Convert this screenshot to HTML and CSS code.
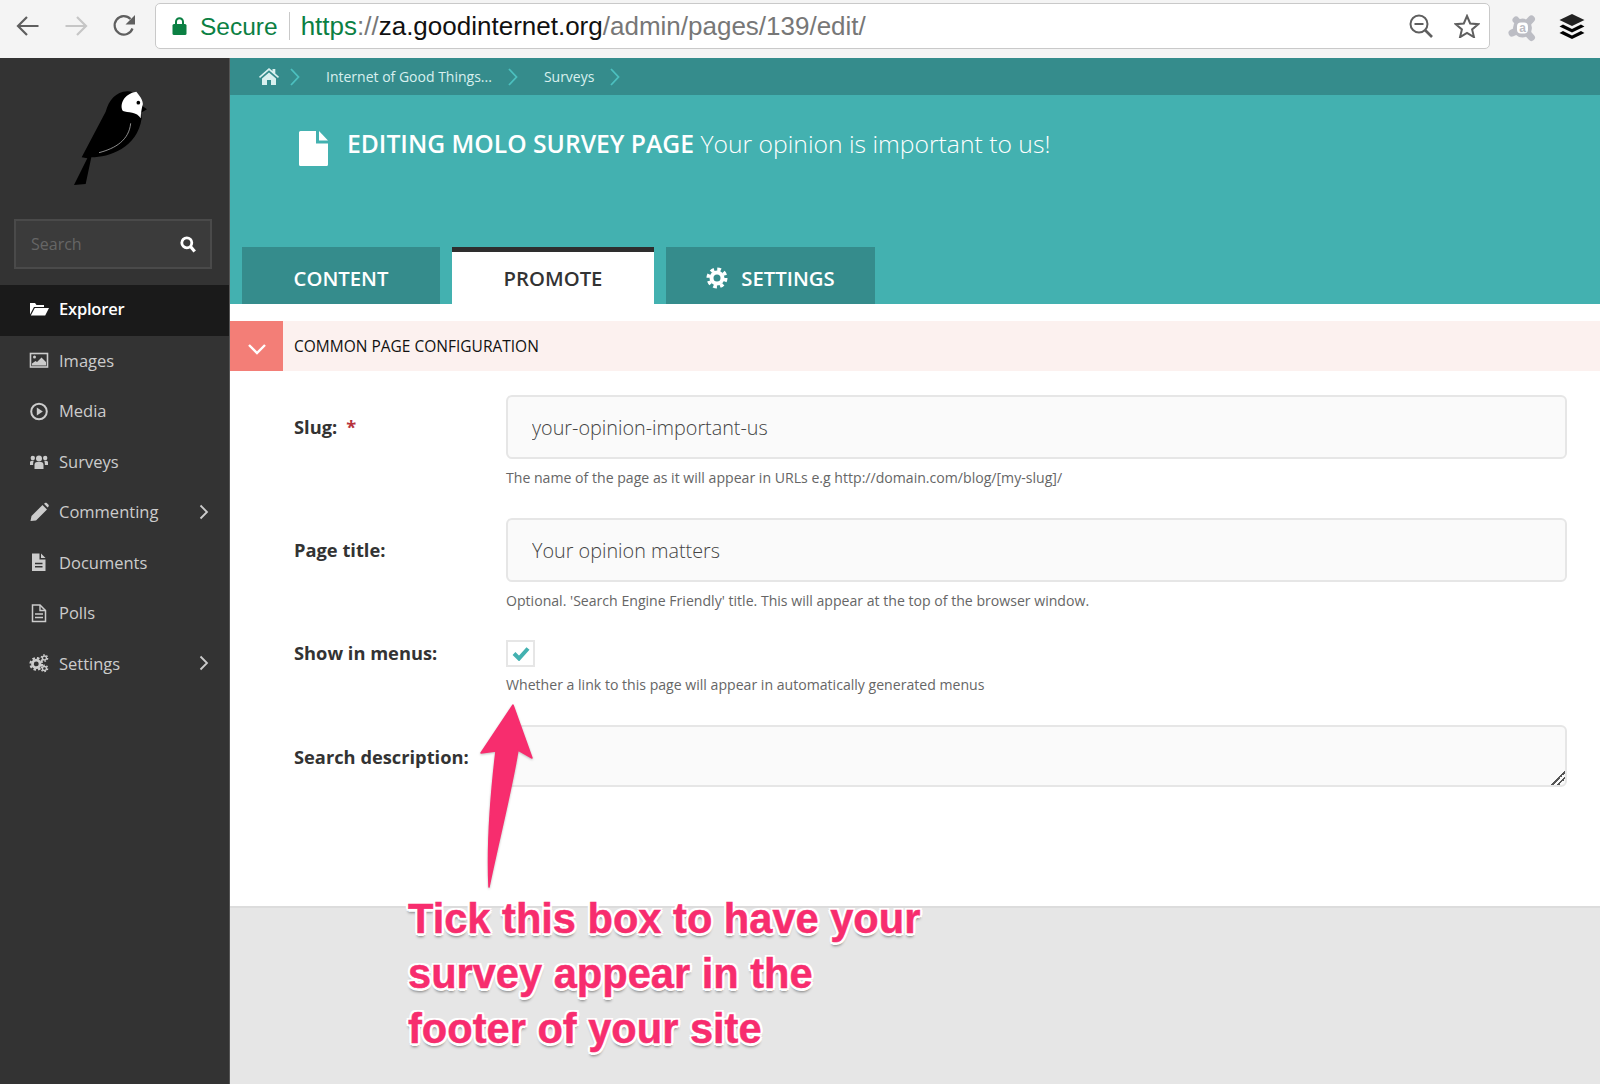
FILE: index.html
```html
<!DOCTYPE html>
<html lang="en">
  <head>
    <meta charset="UTF-8" />
    <title>Editing Molo Survey Page</title>
    <link rel="stylesheet" href="styles.css">
  </head>
  <body>
    <div class="browserBar">
      <svg class="navIcon" width="24" height="22" viewBox="0 0 24 22"><path d="M22.5 11H2M11 2 2 11l9 9" fill="none" stroke="#5f5f5f" stroke-width="2.2"/></svg>
      <svg class="navIcon" width="24" height="22" viewBox="0 0 24 22"><path d="M1.5 11H22M13 2l9 9-9 9" fill="none" stroke="#c6c6c6" stroke-width="2.2"/></svg>
      <svg class="navIcon" width="24" height="24" viewBox="0 0 24 24"><path d="M20.5 14.5A9.2 9.2 0 1 1 18.5 5" fill="none" stroke="#5f5f5f" stroke-width="2.2"/><path d="M23 1v9.5h-9.5z" fill="#5f5f5f"/></svg>
      <div class="urlBox">
        <svg class="lock" width="15" height="18" viewBox="0 0 15 18"><path d="M4 8V4.800a3.500 3.500 0 0 1 7 0V8" fill="none" stroke="#0b8043" stroke-width="2"/><rect x="0.500" y="7" width="14" height="11" rx="1.500" fill="#0b8043"/></svg>
        <span class="secure">Secure</span>
        <span class="urlSep"></span>
        <span class="url"><span class="urlGreen">https</span><span class="urlGrey">://</span>za.goodinternet.org<span class="urlGrey">/admin/pages/139/edit/</span></span>
        <svg class="urlZoom" width="24" height="24" viewBox="0 0 24 24"><circle cx="10" cy="10" r="8.500" fill="none" stroke="#5f5f5f" stroke-width="2"/><path d="M5.500 10h9" stroke="#5f5f5f" stroke-width="2"/><path d="m16 16 7 7" stroke="#5f5f5f" stroke-width="2.600"/></svg>
        <svg class="urlStar" width="26" height="24" viewBox="0 0 26 24"><path d="M13 2l3.200 7.500 8 .7-6.100 5.200 1.900 7.800-7-4.200-7 4.200 1.900-7.800L1.800 10.200l8-.7z" fill="none" stroke="#5f5f5f" stroke-width="2"/></svg>
      </div>
      <svg class="avast" width="29" height="29" viewBox="0 0 29 29">
        <path d="M15 14 23.500 5M15 14 23.500 23.500M15 14 4 19M15 14 8 6" stroke="#bcbdc4" stroke-width="7" stroke-linecap="round"/>
        <circle cx="14.500" cy="14" r="9.500" fill="#bcbdc4"/>
        <rect x="9" y="8.500" width="11" height="11" rx="4" fill="#fff"/>
        <text class="avastLetter" x="14.500" y="18" text-anchor="middle">a</text>
      </svg>
      <svg class="buffer" width="26" height="26" viewBox="0 0 26 26">
        <path d="M13 0 25.500 6 13 12 .5 6z" fill="#222"/>
        <path d="M4 10.500 13 15l9-4.500 3.500 2L13 18.500.5 12.500z" fill="#000"/>
        <path d="M4 17 13 21.500l9-4.500 3.500 2L13 25 .5 19z" fill="#000"/>
      </svg>
    </div>

    <div class="shell">
      <div class="sidebar">
        <div class="logo">
          <svg width="100" height="110" viewBox="0 0 300 330">
            <path d="M45 315 80 312 97 232C150 232 235 205 248 115L246 98 264 88 250 78C245 50 225 33 205 34 170 36 150 60 140 95L68 232 85 235z" fill="#000"/>
            <path d="M232 35C195 40 180 75 192 93 205 98 235 95 245 115 246 100 247 90 250 78 256 68 245 50 232 35z" fill="#fff"/>
            <circle cx="238" cy="68" r="5.500" fill="#000"/>
            <path d="M215 130C210 180 170 205 120 218" fill="none" stroke="#aaa" stroke-width="2.500"/>
          </svg>
        </div>
        <div class="searchBox">
          <input type="text" placeholder="Search" />
          <svg width="16" height="17" viewBox="0 0 16 17"><circle cx="6.800" cy="6.800" r="5" fill="none" stroke="#fff" stroke-width="2.800"/><path d="m10.500 10.500 4.200 5" stroke="#fff" stroke-width="3.200"/></svg>
        </div>
        <nav class="sideNav">
          <a class="active">
            <svg width="20" height="20" viewBox="0 0 20 20"><path d="M1 4h5l1.500 2H15v2H5L1 15.500z M5.800 9H20l-3.800 7.500H1.800z" fill="#fff"/></svg>
            Explorer
          </a>
          <a>
            <svg width="20" height="20" viewBox="0 0 20 20"><rect x="1.500" y="3.500" width="17" height="13.500" fill="none" stroke="#ccc" stroke-width="1.600"/><circle cx="5.500" cy="7" r="1.500" fill="#ccc"/><path d="M3 15.500v-2l3.500-2.500 1.500 1 4.500-4.500 4.500 4.500v3.500z" fill="#ccc"/></svg>
            Images
          </a>
          <a>
            <svg width="20" height="20" viewBox="0 0 20 20"><circle cx="10" cy="10.500" r="7.800" fill="none" stroke="#ccc" stroke-width="2"/><path d="M7.800 6.500v8l6-4z" fill="#ccc"/></svg>
            Media
          </a>
          <a>
            <svg width="20" height="20" viewBox="0 0 20 20"><circle cx="10" cy="7.500" r="3" fill="#ccc"/><circle cx="3.800" cy="7" r="2.200" fill="#ccc"/><circle cx="16.200" cy="7" r="2.200" fill="#ccc"/><path d="M5.500 18v-4c0-2 1-3 2.500-3h4c1.500 0 2.500 1 2.500 3v4z" fill="#ccc"/><path d="M1 14v-2.500c0-1 .7-1.800 1.800-1.800H5c-.6.700-.9 1.800-.9 4.300zM19 14v-2.500c0-1-.7-1.800-1.800-1.800H15c.6.700.9 1.800.9 4.300z" fill="#ccc"/></svg>
            Surveys
          </a>
          <a>
            <svg width="20" height="20" viewBox="0 0 20 20"><path d="M1.500 19 2.500 14 13.500 3l4.500 4.500L7 18.500zM15 1.800l1-.8c.6-.4 1.200-.4 1.700 0L19.500 2.800c.4.500.4 1.100 0 1.600l-.9 1z" fill="#ccc"/></svg>
            Commenting
            <svg class="chevron" width="10" height="16" viewBox="0 0 10 16"><path d="m1.500 1.500 6.500 6.500-6.500 6.500" fill="none" stroke="#ccc" stroke-width="1.800"/></svg>
          </a>
          <a>
            <svg width="20" height="20" viewBox="0 0 20 20"><path d="M3 1.500h7.500v6h6V19H3z" fill="#ccc"/><path d="M12 1.500l4.500 4.500H12z" fill="#ccc"/><path d="M6 11.500h7.500M6 14.800h7.500" stroke="#333" stroke-width="1.400"/></svg>
            Documents
          </a>
          <a>
            <svg width="20" height="20" viewBox="0 0 20 20"><path d="M3.500 2h7.500l5.500 5.500V18.500h-13z" fill="none" stroke="#ccc" stroke-width="1.500"/><path d="M11 2v5.500h5.500M6 11h8M6 14.500h8" fill="none" stroke="#ccc" stroke-width="1.400"/></svg>
            Polls
          </a>
          <a>
            <svg width="22" height="20" viewBox="0 0 22 20">
              <circle cx="8" cy="11" r="4.200" fill="none" stroke="#ccc" stroke-width="3"/>
              <circle cx="8" cy="11" r="6.400" fill="none" stroke="#ccc" stroke-width="2.400" stroke-dasharray="2.800 2.220"/>
              <circle cx="17" cy="4.500" r="2.200" fill="none" stroke="#ccc" stroke-width="1.500"/>
              <circle cx="17" cy="4.500" r="3.500" fill="none" stroke="#ccc" stroke-width="1.500" stroke-dasharray="1.800 1.860"/>
              <circle cx="17" cy="16" r="2.200" fill="none" stroke="#ccc" stroke-width="1.500"/>
              <circle cx="17" cy="16" r="3.500" fill="none" stroke="#ccc" stroke-width="1.500" stroke-dasharray="1.800 1.860"/>
            </svg>
            Settings
            <svg class="chevron" width="10" height="16" viewBox="0 0 10 16"><path d="m1.500 1.500 6.500 6.500-6.500 6.500" fill="none" stroke="#ccc" stroke-width="1.800"/></svg>
          </a>
        </nav>
      </div>

      <div class="main">
        <div class="crumbs">
          <svg class="crumbHome" width="20" height="17" viewBox="0 0 20 17"><path d="M10 0 13.500 3V1h2.800v4.500L20 8.800l-1 1.200-9-7.700L1 10 0 8.800z" fill="#d9f0ef"/><path d="M3 10.500 10 4.500l7 6V17h-5v-5H8v5H3z" fill="#d9f0ef"/></svg>
          <svg class="crumbArrow" width="10" height="18" viewBox="0 0 10 18"><path d="m1 1 7.500 8L1 17" fill="none" stroke="#4cc0bf" stroke-width="1.800"/></svg>
          <span>Internet of Good Things...</span>
          <svg class="crumbArrow" width="10" height="18" viewBox="0 0 10 18"><path d="m1 1 7.500 8L1 17" fill="none" stroke="#4cc0bf" stroke-width="1.800"/></svg>
          <span>Surveys</span>
          <svg class="crumbArrow" width="10" height="18" viewBox="0 0 10 18"><path d="m1 1 7.500 8L1 17" fill="none" stroke="#4cc0bf" stroke-width="1.800"/></svg>
        </div>

        <div class="pageHeader">
          <div class="pageTitle">
            <svg width="29" height="35" viewBox="0 0 29 35"><path d="M1.500 0H17v12.500h12V33.500a1.500 1.500 0 0 1-1.500 1.500h-26A1.500 1.500 0 0 1 0 33.500V1.500A1.500 1.500 0 0 1 1.500 0z" fill="#fff"/><path d="M20 0l9 9.500h-9z" fill="#fff"/></svg>
            <h1><b>EDITING MOLO SURVEY PAGE</b> Your opinion is important to us!</h1>
          </div>
          <div class="tabs">
            <div class="tab tabContent">CONTENT</div>
            <div class="tab tabActive">PROMOTE</div>
            <div class="tab tabSettings">
              <svg width="22" height="22" viewBox="0 0 22 22"><circle cx="11" cy="11" r="5.500" fill="none" stroke="#fff" stroke-width="4"/><circle cx="11" cy="11" r="8.800" fill="none" stroke="#fff" stroke-width="3.400" stroke-dasharray="3.700 3.210"/></svg>
              SETTINGS
            </div>
          </div>
        </div>

        <div class="sectionBar">
          <div class="sectionToggle">
            <svg width="20" height="12" viewBox="0 0 20 12"><path d="m2 2 8 8 8-8" fill="none" stroke="#fff" stroke-width="2.400"/></svg>
          </div>
          <span>COMMON PAGE CONFIGURATION</span>
        </div>

        <div class="form">
          <div class="field">
            <label>Slug:<span class="required">*</span></label>
            <input class="textInput" type="text" value="your-opinion-important-us" />
          </div>
          <p class="help">The name of the page as it will appear in URLs e.g http://domain.com/blog/[my-slug]/</p>
          <div class="field">
            <label>Page title:</label>
            <input class="textInput" type="text" value="Your opinion matters" />
          </div>
          <p class="help helpTitle">Optional. 'Search Engine Friendly' title. This will appear at the top of the browser window.</p>
          <div class="field">
            <label>Show in menus:</label>
            <div class="checkbox">
              <svg width="18" height="15" viewBox="0 0 18 15"><path d="M2 7.500 7 12.500 16 2.500" fill="none" stroke="#43b1b0" stroke-width="4"/></svg>
            </div>
          </div>
          <p class="help helpTight">Whether a link to this page will appear in automatically generated menus</p>
          <div class="field">
            <label class="labelLow">Search description:</label>
            <textarea class="textArea"></textarea>
          </div>
        </div>
        <div class="footerArea"></div>
      </div>
    </div>

    <!-- annotation drawn on top of the screenshot -->
    <svg class="calloutArrow" width="60" height="190" viewBox="0 0 60 190">
      <path d="M34 2 53 55 39 47C33 85 19 140 10 184 8 140 12 90 17 48L2 50z" fill="#f72d6e" stroke="#f72d6e" stroke-linejoin="round" stroke-width="1.500"/>
    </svg>
    <p class="calloutText">Tick this box to have your<br>survey appear in the<br>footer of your site</p>
  </body>
</html>
```

FILE: styles.css
```css
* {
  box-sizing: border-box;
}
html,
body {
  margin: 0;
  height: 1084px;
  overflow: hidden;
  font-family: "Open Sans", sans-serif;
  background-color: #e6e6e6;
}

/* browser chrome */
.browserBar {
  display: flex;
  align-items: center;
  height: 58px;
  padding: 0 15px 7px 16px;
  background-color: #f4f4f4;
  position: relative;
}
.navIcon {
  margin-right: 24px;
  flex: none;
}
.navIcon:nth-child(3) {
  margin-right: 19px;
}
.urlBox {
  display: flex;
  align-items: center;
  width: 1337px;
  height: 46px;
  padding: 0 9px 0 16px;
  background-color: #fff;
  border: 1px solid #c9c9c9;
  border-radius: 5px;
  font-family: "Liberation Sans", sans-serif;
  font-size: 26px;
  white-space: nowrap;
}
.secure {
  margin: 2px 0 0 13px;
  color: #0b8043;
  font-size: 24.500px;
}
.urlSep {
  width: 1px;
  height: 28px;
  margin: 0 11px;
  background-color: #c9c9c9;
}
.url {
  margin-top: 2px;
  color: #111;
}
.urlGreen {
  color: #0b8043;
}
.urlGrey {
  color: #777;
}
.urlZoom {
  margin-left: auto;
}
.urlStar {
  margin-left: 21px;
}
.avast {
  margin-left: 18px;
  margin-top: 5px;
}
.avastLetter {
  fill: #bcbdc4;
  font-family: "Liberation Sans", sans-serif;
  font-size: 12px;
  font-weight: 700;
}
.buffer {
  margin-left: 22px;
  margin-top: 3px;
}

/* layout */
.shell {
  display: flex;
  height: 1026px;
}
.sidebar {
  width: 230px;
  flex: none;
  background-color: #333;
  border-right: 1px solid #555;
}
.main {
  flex: 1;
  display: flex;
  flex-direction: column;
  min-width: 0;
  background-color: #fff;
}

/* sidebar */
.logo {
  display: flex;
  justify-content: center;
  height: 161px;
  padding: 22px 12px 0 0;
}
.searchBox {
  display: flex;
  align-items: center;
  justify-content: space-between;
  width: 198px;
  height: 50px;
  margin: 0 0 16px 14px;
  padding: 0 14px 0 15px;
  background-color: #3b3b3b;
  border: 2px solid #4a4a4a;
}
.searchBox input {
  width: 120px;
  padding: 0;
  background-color: transparent;
  border: 0;
  font-family: "Open Sans", sans-serif;
  font-size: 16px;
}
.searchBox input::placeholder {
  color: #666;
}
.sideNav {
  display: flex;
  flex-direction: column;
}
.sideNav a {
  display: flex;
  align-items: center;
  height: 50.5px;
  padding: 0 0 2px 29px;
  color: #ccc;
  font-size: 16.500px;
}
.sideNav a > svg:first-child {
  flex: none;
  width: 20px;
  margin-right: 10px;
}
.sideNav a.active {
  height: 51px;
  padding-bottom: 4px;
  background-color: #1a1a1a;
  color: #fff;
  font-weight: 600;
  letter-spacing: -0.2px;
}
.chevron {
  margin-left: auto;
  margin-right: 20px;
}

/* breadcrumb and header */
.crumbs {
  display: flex;
  align-items: center;
  height: 37px;
  padding-left: 29px;
  background-color: #358c8c;
  color: #d9f0ef;
  font-size: 14px;
}
.crumbHome {
  margin-right: 11px;
}
.crumbArrow {
  margin-right: 26px;
}
.crumbs span + .crumbArrow {
  margin-left: 16px;
}
.pageHeader {
  display: flex;
  flex-direction: column;
  justify-content: space-between;
  height: 209px;
  background-color: #43b1b0;
}
.pageTitle {
  display: flex;
  align-items: center;
  padding: 32px 0 0 69px;
  color: #fff;
}
.pageTitle h1 {
  margin: 0 0 9px 19px;
  font-size: 24.700px;
  font-weight: 300;
  white-space: nowrap;
}
.pageTitle b {
  font-weight: 600;
}
.tabs {
  display: flex;
  gap: 12px;
  padding-left: 12px;
}
.tab {
  display: flex;
  align-items: center;
  justify-content: center;
  height: 57px;
  padding-top: 5px;
  background-color: #358c8c;
  color: #fff;
  font-size: 20.300px;
  font-weight: 600;
}
.tabContent {
  width: 198px;
}
.tabSettings {
  width: 209px;
  gap: 13px;
}
.tabActive {
  width: 202px;
  padding-top: 0;
  background-color: #fff;
  border-top: 5px solid #2e2e2e;
  color: #333;
}

/* collapsible section heading */
.sectionBar {
  display: flex;
  align-items: center;
  height: 50px;
  margin-top: 17px;
  background-color: #fcf1ef;
  color: #111;
  font-size: 15.500px;
}
.sectionToggle {
  display: flex;
  align-items: center;
  justify-content: center;
  width: 53px;
  height: 100%;
  margin-right: 11px;
  padding-top: 6px;
  background-color: #f37e77;
}

/* form */
.form {
  padding: 24px 33px 119px 64px;
  background-color: #fff;
  border-bottom: 2px solid #dcdcdc;
}
.field {
  display: flex;
  align-items: center;
}
.field label {
  width: 212px;
  flex: none;
  margin-bottom: 2px;
  color: #333;
  font-size: 18.300px;
  font-weight: 700;
}
.field .labelLow {
  margin-bottom: 0;
}
.required {
  margin-left: 9px;
  color: #b7323c;
}
.textInput,
.textArea {
  flex: 1;
  display: block;
  padding: 0 24px;
  background-color: #fafafa;
  border: 2px solid #e6e6e6;
  border-radius: 6px;
  color: #444;
  font-family: "Open Sans", sans-serif;
  font-size: 19.800px;
  font-weight: 300;
}
.textInput {
  height: 64px;
}
.textArea {
  height: 62px;
}
.textArea::-webkit-resizer {
  background: linear-gradient(135deg, transparent 52%, #555 52%, #555 60%, transparent 60%, transparent 72%, #555 72%, #555 80%, transparent 80%);
}
.checkbox {
  display: flex;
  align-items: center;
  justify-content: center;
  width: 29px;
  height: 27px;
  border: 2px solid #e6e6e6;
}
.help {
  margin: 9px 0 30px 212px;
  color: #666;
  font-size: 14.100px;
  line-height: 20px;
}
.helpTitle {
  margin-bottom: 29px;
}
.helpTight {
  margin-top: 8px;
}
.footerArea {
  flex: 1;
  background-color: #e6e6e6;
}

/* annotation */
.calloutArrow {
  position: absolute;
  left: 479px;
  top: 703px;
  filter: drop-shadow(0 1px 1px rgba(0, 0, 0, 0.25));
}
.calloutText {
  position: absolute;
  left: 408px;
  top: 891px;
  margin: 0;
  color: #f72d6e;
  font-family: "Liberation Sans", sans-serif;
  font-size: 41.600px;
  font-weight: 700;
  line-height: 55px;
  white-space: nowrap;
  -webkit-text-stroke: 0.5px #f72d6e;
  text-shadow: 2.500px 0 0 #fff, -2.500px 0 0 #fff, 0 2.500px 0 #fff, 0 -2.500px 0 #fff, 2px 2px 0 #fff, -2px 2px 0 #fff, 2px -2px 0 #fff, -2px -2px 0 #fff, 0 4px 3px rgba(0, 0, 0, 0.45);
}
```
